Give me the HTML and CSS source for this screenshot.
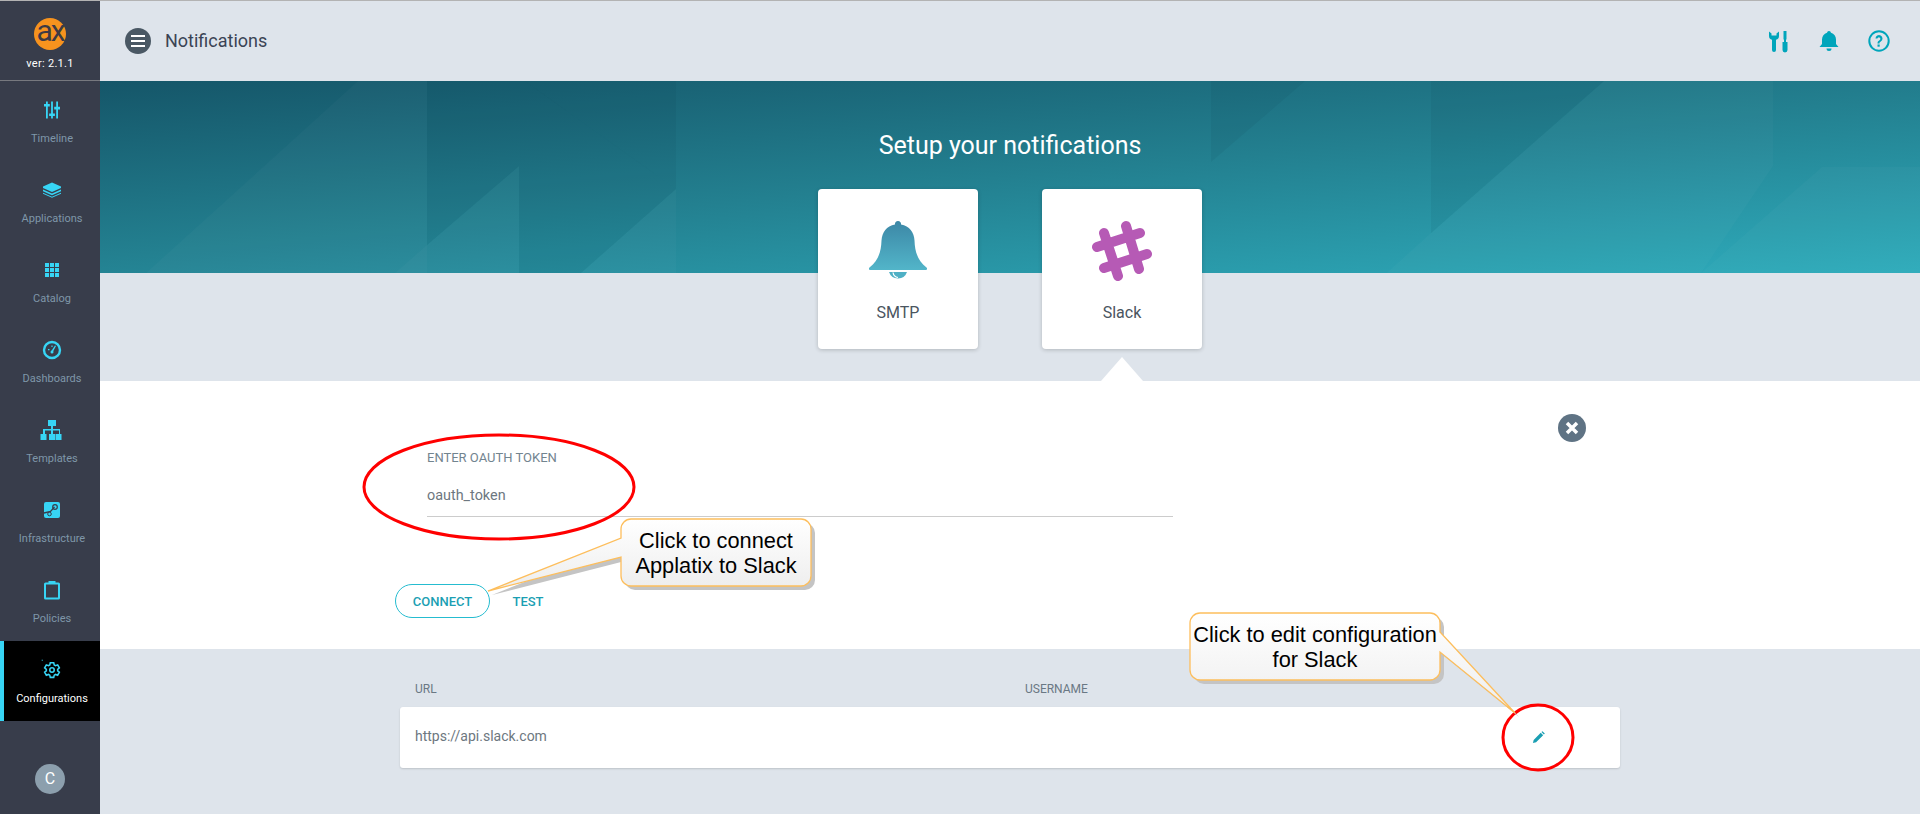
FILE: index.html
```html
<!DOCTYPE html>
<html lang="en">
<head>
    <meta charset="UTF-8">
    <meta name="viewport" content="width=device-width, initial-scale=1.0">
    <title>Notifications</title>
    <link rel="stylesheet" href="styles.css">
</head>
<body>

<div class="app">
    <aside class="sidebar">
        <div class="brand">
            <div class="logo">ax</div>
            <div class="version">ver: 2.1.1</div>
        </div>
        <nav class="nav">
            <a class="nav-item">
                <svg class="nav-icon" viewBox="0 0 24 24"><path d="M6 3.500h1.800v17H6zM11.100 3.500h1.800v17h-1.800zM16.200 3.500H18v17h-1.800z"/><path d="M4 6h5.800v2.600H4zM9.100 15.500h5.800v2.600H9.100zM14.200 8.800H20v2.600h-5.800z"/></svg>
                <span>Timeline</span>
            </a>
            <a class="nav-item">
                <svg class="nav-icon" viewBox="0 0 24 24"><path d="M12 4.500l9 4v1.500l-9 4-9-4V8.500z"/><path d="M3 11.500l9 4 9-4v1.800l-9 4-9-4z"/><path d="M3 14.800l9 4 9-4v1l-9 4-9-4z"/></svg>
                <span>Applications</span>
            </a>
            <a class="nav-item">
                <svg class="nav-icon" viewBox="0 0 24 24"><path d="M5 5h4v4H5zM10 5h4v4h-4zM15 5h4v4h-4zM5 10h4v4H5zM10 10h4v4h-4zM15 10h4v4h-4zM5 15h4v4H5zM10 15h4v4h-4zM15 15h4v4h-4z"/></svg>
                <span>Catalog</span>
            </a>
            <a class="nav-item">
                <svg class="nav-icon" viewBox="0 0 24 24"><circle cx="12" cy="12" r="8" fill="none" stroke="#37d5f5" stroke-width="2.400"/><path d="M11 13.500l4-6 1 .6-3.500 6.400z"/><circle cx="12" cy="14" r="1.500"/><path d="M8 11h1.500v1.200H8zM11.400 7.500h1.200V9h-1.200z"/></svg>
                <span>Dashboards</span>
            </a>
            <a class="nav-item">
                <svg class="nav-icon" viewBox="0 0 24 24"><path d="M8 2h8v6h-3v3h7v5h1.500v6h-6v-6H19v-3.500h-6V16h2v6H9v-6h2v-3.500H5V16h1.500v6h-6v-6H3v-5h8V8H8z"/></svg>
                <span>Templates</span>
            </a>
            <a class="nav-item">
                <svg class="nav-icon" viewBox="0 0 24 24"><rect x="4" y="4" width="16" height="16" rx="2"/><path d="M4 15l6.500-1.500 4-4.500" fill="none" stroke="#383d4b" stroke-width="1.300"/><circle cx="15" cy="9" r="2.300" fill="none" stroke="#383d4b" stroke-width="1.200"/><circle cx="9.500" cy="16" r="1.800" fill="none" stroke="#383d4b" stroke-width="1"/></svg>
                <span>Infrastructure</span>
            </a>
            <a class="nav-item">
                <svg class="nav-icon" viewBox="0 0 24 24"><path d="M8.500 4.500H5.500a1.500 1.500 0 0 0-1.500 1.500v14a1.500 1.500 0 0 0 1.500 1.500h13a1.500 1.500 0 0 0 1.500-1.500V6a1.500 1.500 0 0 0-1.500-1.500h-3V3h-7zM6 6.500h12V19.500H6z" fill-rule="evenodd"/></svg>
                <span>Policies</span>
            </a>
            <a class="nav-item active">
                <svg class="nav-icon" viewBox="-2 -2 28 28"><rect x="0" y="0" width="1.200" height="1.200"/><path d="M10 3.500h4l.6 2.600 1.500.8 2.500-.9 2 3.500-2 1.700v1.700l2 1.700-2 3.500-2.500-.9-1.500.8-.6 2.600h-4l-.6-2.600-1.500-.8-2.500.9-2-3.500 2-1.700v-1.700l-2-1.700 2-3.500 2.500.9 1.500-.8z" fill="none" stroke="#37d5f5" stroke-width="1.800"/><circle cx="12" cy="12" r="2.600" fill="none" stroke="#37d5f5" stroke-width="1.800"/></svg>
                <span>Configurations</span>
            </a>
        </nav>
        <div class="avatar">C</div>
    </aside>

    <main class="main">
        <header class="topbar">
            <div class="menu-btn"><span></span><span></span><span></span></div>
            <h1 class="page-title">Notifications</h1>
            <div class="top-icons">
                <svg class="top-icon" viewBox="0 0 24 24"><path d="M2 2.500v4.500a4 4 0 0 0 3 3.800V21a2 2 0 0 0 4 0V10.800A4 4 0 0 0 12 7V2.500L9.500 4.500v2h-5v-2z"/><path d="M16.500 2h3v8.500h-.5V13h1.500v8a2.500 2.500 0 0 1-5 0v-8H17v-2.500h-.5z"/></svg>
                <svg class="top-icon" viewBox="0 0 24 24"><path d="M12 2a2 2 0 0 1 2 1.700c3 .8 5 3.500 5 6.800v4.500l2.500 3H2.500l2.500-3v-4.500c0-3.300 2-6 5-6.800A2 2 0 0 1 12 2z"/><path d="M9.500 19.500h5a2.500 2.500 0 0 1-5 0z"/></svg>
                <svg class="top-icon" viewBox="0 0 24 24"><circle cx="12" cy="12" r="9.700" fill="none" stroke="#00a5bb" stroke-width="2"/><path d="M8.500 9.500a3.500 3.500 0 1 1 5.300 3c-1 .6-1.300 1-1.300 2h-2c0-1.700.6-2.400 1.900-3.300a1.500 1.500 0 1 0-2-1.700z"/><rect x="10.500" y="15.500" width="2.200" height="2.200"/></svg>
            </div>
        </header>

        <section class="hero">
            <svg class="hero-pattern" viewBox="100 81 1820 192" preserveAspectRatio="none">
                <polygon class="shade" points="427,81 525,81 676,189 581,273 519,273 519,166 427,245"/>
                <polygon class="shade" points="525,81 676,81 676,189"/>
                <polygon class="glow" points="358,81 427,81 427,273 146,273"/>
                <polygon class="glow" points="427,245 519,166 519,273 395,273"/>
                <polygon class="glow" points="676,189 676,273 581,273"/>
                <polygon class="shade" points="1211,81 1305,81 1211,162"/>
                <polygon class="shade" points="1431,81 1604,81 1431,233"/>
                <polygon class="glow" points="1431,233 1431,273 1387,273"/>
                <polygon class="glow" points="1604,81 1773,81 1773,166 1701,273 1431,273 1431,233"/>
                <polygon class="glow" points="1822,167 1920,167 1920,273 1701,273"/>
            </svg>
            <h2 class="hero-title">Setup your notifications</h2>
        </section>

        <div class="cards">
            <div class="card">
                <svg class="card-icon" viewBox="0 0 64 64">
                    <defs>
                        <linearGradient id="bellFill" x1="0" y1="0" x2="0" y2="1">
                            <stop offset="0" stop-color="#3c87a6"/>
                            <stop offset="1" stop-color="#52b5c9"/>
                        </linearGradient>
                    </defs>
                    <path fill="url(#bellFill)" d="M32 2a3 3 0 0 1 3 3.500c8.500 1.300 13 8 13.500 16 .4 11 3 20 12 27 1 1 .6 2.500-1 2.500H4.500c-1.600 0-2-1.500-1-2.500 9-7 11.600-16 12-27 .5-8 5-14.700 13.500-16A3 3 0 0 1 32 2z"/>
                    <path fill="#4fb0c5" d="M23 53h18a9.500 9.500 0 0 1-18 0z"/>
                    <path fill="none" stroke="#fff" stroke-width="1.200" d="M27 53.500a6 6 0 0 0 5 5"/>
                </svg>
                <span class="card-label">SMTP</span>
            </div>
            <div class="card is-active">
                <svg class="card-icon" viewBox="0 0 64 64">
                    <path fill="none" stroke="#b65ab5" stroke-width="10" stroke-linecap="round" d="M14 14l14 43M36 7l13 43M7 28l43-14M14 49l43-14"/>
                </svg>
                <span class="card-label">Slack</span>
            </div>
        </div>

        <section class="form-panel">
            <div class="close-btn">
                <svg viewBox="0 0 28 28"><circle cx="14" cy="14" r="14"/><path d="M9 9l10 10M19 9L9 19"/></svg>
            </div>
            <label class="field-label">ENTER OAUTH TOKEN</label>
            <div class="field-value">oauth_token</div>
            <div class="form-actions">
                <button class="btn btn-outline">CONNECT</button>
                <button class="btn btn-plain">TEST</button>
            </div>
        </section>

        <section class="config-list">
            <div class="list-head">
                <span>URL</span>
                <span>USERNAME</span>
            </div>
            <div class="list-row">
                <span class="row-url">https://api.slack.com</span>
                <span class="row-action">
                    <svg class="pencil" viewBox="0 0 14 14"><path d="M1 13l.8-3.400 7.600-7.600 2.600 2.600-7.600 7.600zM10.200 1.200l1-1 2.600 2.600-1 1z"/></svg>
                </span>
            </div>
        </section>
    </main>

    <svg class="marks" viewBox="0 0 1920 814">
        <defs>
            <linearGradient id="noteFill" x1="0" y1="0" x2="0" y2="1">
                <stop offset="0" stop-color="#fff"/>
                <stop offset="1" stop-color="#ededed"/>
            </linearGradient>
        </defs>
        <ellipse cx="499" cy="487" rx="135" ry="52" class="ring"/>
        <ellipse cx="1538" cy="737.500" rx="35" ry="32.500" class="ring"/>
        <path class="note-shadow" d="M631 519h170a10 10 0 0 1 10 10v47a10 10 0 0 1-10 10H631a10 10 0 0 1-10-10v-19l-133 34 133-53v-9a10 10 0 0 1 10-10z"/>
        <path class="note-shape" d="M631 519h170a10 10 0 0 1 10 10v47a10 10 0 0 1-10 10H631a10 10 0 0 1-10-10v-19l-133 34 133-53v-9a10 10 0 0 1 10-10z"/>
        <path class="note-shadow" d="M1200 613h230a10 10 0 0 1 10 10v9l75 81-75-61v18a10 10 0 0 1-10 10H1200a10 10 0 0 1-10-10v-47a10 10 0 0 1 10-10z"/>
        <path class="note-shape" d="M1200 613h230a10 10 0 0 1 10 10v9l75 81-75-61v18a10 10 0 0 1-10 10H1200a10 10 0 0 1-10-10v-47a10 10 0 0 1 10-10z"/>
    </svg>
    <div class="note note-connect">Click to connect<br>Applatix to Slack</div>
    <div class="note note-edit">Click to edit configuration<br>for Slack</div>
</div>

</body>
</html>
```

FILE: styles.css
```css
* {
    box-sizing: border-box;
}
body {
    margin: 0;
    font-family: Roboto, "Liberation Sans", sans-serif;
    background: #dee4eb;
}
.app {
    position: relative;
    display: flex;
    height: 814px;
    overflow: hidden;
    border-top: 1px solid #b3b3b3;
}

/* sidebar */
.sidebar {
    flex: 0 0 100px;
    display: flex;
    flex-direction: column;
    background: #383d4b;
}
.brand {
    height: 80px;
    padding-top: 17px;
    display: flex;
    flex-direction: column;
    align-items: center;
    border-bottom: 1px solid #77797f;
}
.logo {
    width: 32px;
    height: 32px;
    border-radius: 50%;
    background: #f7931e;
    color: #3d3a44;
    font-size: 30px;
    line-height: 26px;
    text-align: center;
    letter-spacing: -2px;
}
.version {
    margin-top: 7px;
    color: #fff;
    font-size: 11px;
    line-height: 14px;
    letter-spacing: .3px;
}
.nav-item {
    height: 80px;
    padding-top: 17px;
    display: flex;
    flex-direction: column;
    align-items: center;
    border-left: 4px solid transparent;
    color: #7f97a9;
    font-size: 11px;
    line-height: 14px;
}
.nav-item.active {
    background: #000;
    color: #fff;
    border-left-color: #37d5f5;
}
.nav-icon {
    width: 24px;
    height: 24px;
    margin-bottom: 10px;
    fill: #37d5f5;
}
.avatar {
    width: 30px;
    height: 30px;
    margin: 43px auto 0;
    border-radius: 50%;
    background: #8c9fad;
    color: #fff;
    font-size: 16px;
    line-height: 30px;
    text-align: center;
}

/* main */
.main {
    flex: 1;
    display: flex;
    flex-direction: column;
}
.topbar {
    height: 80px;
    padding: 0 29px 0 25px;
    display: flex;
    align-items: center;
}
.menu-btn {
    width: 26px;
    height: 26px;
    border-radius: 50%;
    background: #4a5864;
    display: flex;
    flex-direction: column;
    justify-content: center;
    align-items: center;
    gap: 3px;
}
.menu-btn span {
    width: 14px;
    height: 2px;
    background: #fff;
}
.page-title {
    margin: 0 0 2px 14px;
    font-size: 18px;
    font-weight: 400;
    color: #3a4354;
}
.top-icons {
    margin-left: auto;
    display: flex;
    gap: 26px;
}
.top-icon {
    width: 24px;
    height: 24px;
    fill: #00a5bb;
}

/* hero */
.hero {
    position: relative;
    height: 192px;
    background: linear-gradient(175deg, #155669 0%, #238090 50%, #2eabbb 100%);
    text-align: center;
}
.hero-pattern {
    position: absolute;
    top: 0;
    left: 0;
    width: 100%;
    height: 100%;
}
.shade {
    fill: rgba(0, 30, 50, .06);
}
.glow {
    fill: rgba(255, 255, 255, .025);
}
.hero-title {
    position: relative;
    margin: 0;
    padding-top: 49px;
    color: #fff;
    font-size: 25px;
    line-height: 32px;
    font-weight: 400;
}

/* cards */
.cards {
    position: relative;
    height: 108px;
    display: flex;
    justify-content: center;
    gap: 64px;
}
.card {
    position: relative;
    width: 160px;
    height: 160px;
    margin-top: -84px;
    padding-top: 30px;
    background: #fff;
    border-radius: 4px;
    box-shadow: 0 1px 4px rgba(0, 0, 0, .2);
    display: flex;
    flex-direction: column;
    align-items: center;
}
.card.is-active::after {
    content: "";
    position: absolute;
    bottom: -32px;
    left: 59px;
    border-left: 21px solid transparent;
    border-right: 21px solid transparent;
    border-bottom: 24px solid #fff;
}
.card-icon {
    width: 64px;
    height: 64px;
}
.card-label {
    margin-top: 20px;
    font-size: 16px;
    line-height: 20px;
    color: #4a5560;
}

/* form */
.form-panel {
    position: relative;
    height: 268px;
    padding: 69px 0 0 327px;
    background: #fff;
}
.close-btn {
    position: absolute;
    top: 33px;
    left: 1458px;
    width: 28px;
    height: 28px;
}
.close-btn circle {
    fill: #5f7384;
}
.close-btn path {
    fill: none;
    stroke: #fff;
    stroke-width: 3.500;
}
.field-label {
    display: block;
    font-size: 13px;
    line-height: 16px;
    color: #72848f;
}
.field-value {
    width: 746px;
    margin-top: 12px;
    padding: 8px 0 10px;
    font-size: 14.400px;
    line-height: 20px;
    color: #6d7780;
    border-bottom: 1px solid #ccc;
}
.form-actions {
    margin: 67px 0 0 -32px;
    display: flex;
    align-items: center;
}
.btn {
    height: 34px;
    font-family: inherit;
    font-size: 13px;
    font-weight: 500;
    color: #1b9fb3;
    background: none;
    border: 1px solid transparent;
    border-radius: 17px;
}
.btn-outline {
    width: 95px;
    border-color: #25bcd0;
}
.btn-plain {
    width: 60px;
    margin-left: 8px;
}

/* list */
.config-list {
    flex: 1;
    padding: 32px 300px 0;
}
.list-head,
.list-row {
    display: grid;
    grid-template-columns: 610px 1fr;
    padding-left: 15px;
}
.list-head {
    height: 26px;
    font-size: 12px;
    line-height: 16px;
    color: #6a7884;
}
.list-row {
    height: 61px;
    align-items: center;
    background: #fff;
    border-radius: 3px;
    box-shadow: 0 1px 2px rgba(0, 0, 0, .15);
    font-size: 14px;
    color: #6d7780;
}
.row-url {
    padding-bottom: 4px;
}
.row-action {
    display: flex;
    justify-content: flex-end;
    padding-right: 75px;
}
.pencil {
    width: 13px;
    height: 13px;
    fill: #1b9fb3;
}

/* annotations drawn over the page */
.marks {
    position: absolute;
    top: -1px;
    left: 0;
    width: 1920px;
    height: 814px;
    pointer-events: none;
}
.ring {
    fill: none;
    stroke: #f00;
    stroke-width: 3;
}
.note-shape {
    fill: url(#noteFill);
    stroke: #fdbe5c;
    stroke-width: 1.300;
}
.note-shadow {
    fill: #c4c4c4;
    transform: translate(4px, 4px);
}
.note {
    position: absolute;
    display: flex;
    align-items: center;
    justify-content: center;
    text-align: center;
    font-family: "Liberation Sans", Arial, sans-serif;
    font-size: 21.800px;
    line-height: 25px;
    color: #000;
}
.note-connect {
    top: 518px;
    left: 621px;
    width: 190px;
    height: 67px;
}
.note-edit {
    top: 612px;
    left: 1190px;
    width: 250px;
    height: 67px;
}
```
